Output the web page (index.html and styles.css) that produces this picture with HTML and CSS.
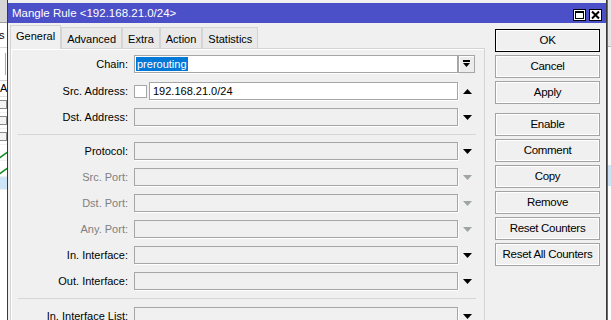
FILE: index.html
```html
<!DOCTYPE html>
<html>
<head>
<meta charset="utf-8">
<title>Mangle Rule</title>
<link rel="stylesheet" href="styles.css">
</head>
<body>
<div class="desk">
  <div class="bg-left">
    <div class="bl-top"></div>
    <div class="bl-head"><span class="bl-text">s</span></div>
    <div class="bl-tool"><span class="bl-vline"></span></div>
    <div class="bl-colhead"><span class="bl-text">Ac</span></div>
    <div class="bl-row"><span class="doc"></span></div>
    <div class="bl-row"><span class="doc"></span></div>
    <div class="bl-row"><span class="doc"></span></div>
    <div class="bl-row"><span class="tick"></span></div>
    <div class="bl-row"><span class="tick"></span></div>
    <div class="bl-row sel"></div>
    <div class="bl-rest"></div>
  </div>

  <div class="window">
    <div class="titlebar">
      <span class="title">Mangle Rule &lt;192.168.21.0/24&gt;</span>
      <div class="tb-btns">
        <span class="tb-btn"><svg width="11" height="10" viewBox="0 0 11 10"><rect x="1.5" y="1.5" width="8" height="7" fill="none" stroke="#000"/><rect x="1" y="1" width="9" height="2" fill="#000"/></svg></span>
        <span class="tb-btn"><svg width="11" height="10" viewBox="0 0 11 10"><path d="M2 1.5 L9 8.5 M9 1.5 L2 8.5" stroke="#000" stroke-width="2"/></svg></span>
      </div>
    </div>

    <div class="wbody">
      <div class="main">
        <div class="tabs">
          <span class="tab active">General</span>
          <span class="tab">Advanced</span>
          <span class="tab">Extra</span>
          <span class="tab">Action</span>
          <span class="tab">Statistics</span>
        </div>
        <div class="panel">
          <div class="row r-chain">
            <span class="label">Chain:</span>
            <span class="field white"><span class="selected">prerouting</span></span>
            <span class="ddbtn"><svg width="9" height="8" viewBox="0 0 9 8"><rect x="1" y="0" width="7" height="2" fill="#000"/><polygon points="1,3 8,3 4.5,7" fill="#000"/></svg></span>
          </div>
          <div class="row">
            <span class="label">Src. Address:</span>
            <span class="fieldgroup"><span class="check"></span><span class="field white grow"><span class="val">192.168.21.0/24</span></span></span>
            <span class="arrow"><svg width="9" height="5" viewBox="0 0 9 5"><polygon points="0,5 9,5 4.5,0" fill="#000"/></svg></span>
          </div>
          <div class="row">
            <span class="label">Dst. Address:</span>
            <span class="field"></span>
            <span class="arrow"><svg width="9" height="5" viewBox="0 0 9 5"><polygon points="0,0 9,0 4.5,5" fill="#000"/></svg></span>
          </div>
          <div class="sep"></div>
          <div class="row">
            <span class="label">Protocol:</span>
            <span class="field"></span>
            <span class="arrow"><svg width="9" height="5" viewBox="0 0 9 5"><polygon points="0,0 9,0 4.5,5" fill="#000"/></svg></span>
          </div>
          <div class="row">
            <span class="label dis">Src. Port:</span>
            <span class="field"></span>
            <span class="arrow"><svg width="9" height="5" viewBox="0 0 9 5"><polygon points="0,0 9,0 4.5,5" fill="#9fa59f"/></svg></span>
          </div>
          <div class="row">
            <span class="label dis">Dst. Port:</span>
            <span class="field"></span>
            <span class="arrow"><svg width="9" height="5" viewBox="0 0 9 5"><polygon points="0,0 9,0 4.5,5" fill="#9fa59f"/></svg></span>
          </div>
          <div class="row">
            <span class="label dis">Any. Port:</span>
            <span class="field"></span>
            <span class="arrow"><svg width="9" height="5" viewBox="0 0 9 5"><polygon points="0,0 9,0 4.5,5" fill="#9fa59f"/></svg></span>
          </div>
          <div class="row">
            <span class="label">In. Interface:</span>
            <span class="field"></span>
            <span class="arrow"><svg width="9" height="5" viewBox="0 0 9 5"><polygon points="0,0 9,0 4.5,5" fill="#000"/></svg></span>
          </div>
          <div class="row">
            <span class="label">Out. Interface:</span>
            <span class="field"></span>
            <span class="arrow"><svg width="9" height="5" viewBox="0 0 9 5"><polygon points="0,0 9,0 4.5,5" fill="#000"/></svg></span>
          </div>
          <div class="sep sep2"></div>
          <div class="row">
            <span class="label">In. Interface List:</span>
            <span class="field"></span>
            <span class="arrow"><svg width="9" height="5" viewBox="0 0 9 5"><polygon points="0,0 9,0 4.5,5" fill="#000"/></svg></span>
          </div>
        </div>
      </div>

      <div class="buttons">
        <span class="btn default">OK</span>
        <span class="btn">Cancel</span>
        <span class="btn group-end">Apply</span>
        <span class="btn">Enable</span>
        <span class="btn">Comment</span>
        <span class="btn">Copy</span>
        <span class="btn">Remove</span>
        <span class="btn">Reset Counters</span>
        <span class="btn">Reset All Counters</span>
      </div>
    </div>
  </div>

  <div class="bg-right">
    <div class="br-top"></div>
    <div class="br-line"></div>
    <div class="br-gap1"></div>
    <div class="br-blue"></div>
    <div class="br-rest"></div>
  </div>
</div>
</body>
</html>
```

FILE: styles.css
```css
html, body {
  margin: 0;
  padding: 0;
  height: 100%;
  overflow: hidden;
}
body {
  font-family: "Liberation Sans", Arial, sans-serif;
  font-size: 11px;
  color: #000;
  background: #fff;
}
.desk {
  display: flex;
  height: 320px;
}

/* ---------- background app, left strip ---------- */
.bg-left {
  width: 7px;
  flex: none;
  overflow: hidden;
  display: flex;
  flex-direction: column;
  background: #fff;
}
.bl-top {
  height: 22px;
  background: #d6d6d6;
  border-bottom: 1px solid #a0a0a0;
}
.bl-head {
  height: 24px;
  background: #fff;
  border-bottom: 1px solid #d8d8d8;
  line-height: 24px;
}
.bl-text {
  display: block;
  margin-left: -1px;
  white-space: nowrap;
}
.bl-tool {
  height: 32px;
  background: #fff;
  display: flex;
  justify-content: flex-end;
  align-items: center;
}
.bl-vline {
  width: 1px;
  height: 22px;
  background: #a8a8a8;
  margin-right: 1px;
}
.bl-colhead {
  height: 15px;
  line-height: 15px;
  border-top: 1px solid #d0d0d0;
  border-bottom: 1px solid #e0e0e0;
}
.bl-colhead .bl-text {
  margin-left: 0;
}
.bl-row {
  height: 15px;
  display: flex;
  align-items: center;
  border-bottom: 1px solid #f0f0f0;
}
.doc {
  width: 7px;
  height: 9px;
  box-sizing: border-box;
  border: 1px solid #8a8a8a;
  border-left: 0;
  background: #f4f4f4;
}
.tick {
  width: 7px;
  height: 5px;
  border-bottom: 2px solid #1d8f2a;
  transform: skewY(-35deg);
}
.bl-row.sel {
  background: #cde4f7;
  height: 12px;
}
.bl-rest {
  flex: 1;
  background: #fff;
}

/* ---------- background app, right strip ---------- */
.bg-right {
  flex: 1;
  display: flex;
  flex-direction: column;
  border-left: 1px solid #6a6a6a;
}
.br-top {
  height: 46px;
  background: #e6e6e6;
}
.br-line {
  height: 1px;
  background: #b8b8b8;
}
.br-gap1 {
  height: 118px;
  background: #fff;
  border-bottom: 1px solid #e2e2e2;
}
.br-blue {
  height: 20px;
  background: #cde4f7;
}
.br-rest {
  flex: 1;
  background: #fff;
}

/* ---------- window ---------- */
.window {
  width: 600px;
  flex: none;
  box-sizing: border-box;
  border-left: 1px solid #3a3a3a;
  border-right: 1px solid #3a3a3a;
  background: #f0f0f0;
  display: flex;
  flex-direction: column;
}
.titlebar {
  height: 20px;
  margin-top: 3px;
  background: #4c50c8;
  color: #fff;
  display: flex;
  align-items: center;
  justify-content: space-between;
  padding: 0 4px 0 4px;
}
.title {
  white-space: nowrap;
  font-size: 11.5px;
}
.tb-btns {
  display: flex;
  gap: 3px;
  margin-top: 3px;
}
.tb-btn {
  width: 13px;
  height: 12px;
  box-sizing: border-box;
  border: 1px solid #000;
  background: #fff;
  display: flex;
  align-items: center;
  justify-content: center;
}
.tb-btn svg {
  display: block;
}

.wbody {
  flex: 1;
  display: flex;
  padding: 2px 6px 0 2px;
  min-height: 0;
}
.main {
  width: 475px;
  flex: none;
  display: flex;
  flex-direction: column;
}

/* tabs */
.tabs {
  display: flex;
  align-items: flex-end;
  height: 23px;
  position: relative;
  z-index: 1;
}
.tab {
  height: 21px;
  box-sizing: border-box;
  border: 1px solid #d4d4d4;
  border-bottom: 0;
  background: #e9e9e9;
  padding: 2px 5px 0 5px;
  line-height: 18px;
  white-space: nowrap;
}
.tab.active {
  height: 24px;
  margin-bottom: -1px;
  background: #f0f0f0;
  padding: 0 5px;
  line-height: 20px;
}

/* panel */
.panel {
  flex: 1;
  border: 1px solid #d4d4d4;
  border-bottom: 0;
  padding-top: 6px;
  box-shadow: inset 1px 1px 0 #fff;
}
.row {
  display: grid;
  grid-template-columns: 123px 324px 18px;
  align-items: center;
  height: 18px;
  margin-bottom: 8px;
}
.row.r-chain {
  margin-bottom: 9px;
}
.label {
  text-align: right;
  padding-right: 6px;
  white-space: nowrap;
}
.label.dis {
  color: #7f7f7f;
}
.field {
  height: 18px;
  box-sizing: border-box;
  border: 1px solid #a6a6a6;
  background: #f0f0f0;
  box-shadow: 1px 1px 0 #fff;
  display: flex;
  align-items: center;
  overflow: hidden;
}
.field.white {
  background: #fff;
}
.selected {
  margin-left: 1px;
  background: #0078d7;
  color: #fff;
  line-height: 14px;
  padding: 0 1px;
}
.fieldgroup {
  display: flex;
  align-items: center;
  gap: 2px;
}
.check {
  width: 13px;
  height: 13px;
  box-sizing: border-box;
  border: 1px solid #a6a6a6;
  background: #fff;
  flex: none;
}
.grow {
  flex: 1;
}
.val {
  padding-left: 3px;
}
.ddbtn {
  width: 17px;
  height: 18px;
  box-sizing: border-box;
  border: 1px solid #a6a6a6;
  background: #ececec;
  box-shadow: inset 1px 1px 0 #fff;
  display: flex;
  align-items: center;
  justify-content: center;
}
.ddbtn svg, .arrow svg {
  display: block;
}
.arrow {
  display: flex;
  justify-content: center;
}
.sep {
  height: 1px;
  background: #d6d6d6;
  margin: 2px 8px 7px 7px;
}
.sep.sep2 {
  margin: 1px 8px 8px 7px;
}

/* buttons */
.buttons {
  width: 105px;
  flex: none;
  margin-left: 10px;
  margin-top: 4px;
  display: flex;
  flex-direction: column;
}
.btn {
  height: 23px;
  box-sizing: border-box;
  border: 1px solid #a3a3a3;
  background: #f0f0f0;
  box-shadow: inset 1px 1px 0 #fff, inset -1px -1px 0 #fff;
  margin-bottom: 3px;
  text-align: center;
  line-height: 21px;
  white-space: nowrap;
  font-size: 11.5px;
  letter-spacing: -0.3px;
}
.btn.default {
  border-color: #000;
}
.btn.group-end {
  margin-bottom: 9px;
}
```
